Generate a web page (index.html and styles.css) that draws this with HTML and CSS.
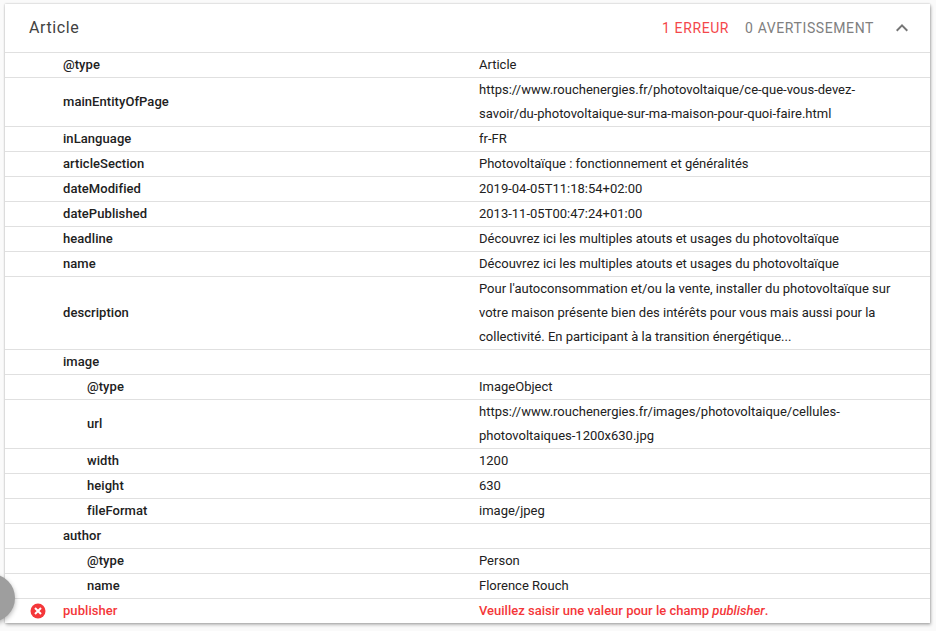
FILE: index.html
```html
<!DOCTYPE html>
<html lang="fr">
<head>
<meta charset="utf-8">
<title>Article</title>
<link rel="stylesheet" href="styles.css">
</head>
<body>
<section class="card">
  <header class="head">
    <h2 class="title">Article</h2>
    <span class="count err">1 ERREUR</span>
    <span class="count warn">0 AVERTISSEMENT</span>
    <svg class="chev" width="24" height="24" viewBox="0 0 24 24"><path d="M7.41 15.41 12 10.83l4.59 4.58L18 14l-6-6-6 6z" fill="#757575"/></svg>
  </header>
  <div class="row"><div class="mark"></div><div class="key">@type</div><div class="val">Article</div></div>
  <div class="row"><div class="mark"></div><div class="key">mainEntityOfPage</div><div class="val">https://www.rouchenergies.fr/photovoltaique/ce-que-vous-devez-<br>savoir/du-photovoltaique-sur-ma-maison-pour-quoi-faire.html</div></div>
  <div class="row"><div class="mark"></div><div class="key">inLanguage</div><div class="val">fr-FR</div></div>
  <div class="row"><div class="mark"></div><div class="key">articleSection</div><div class="val">Photovoltaïque : fonctionnement et généralités</div></div>
  <div class="row"><div class="mark"></div><div class="key">dateModified</div><div class="val">2019-04-05T11:18:54+02:00</div></div>
  <div class="row"><div class="mark"></div><div class="key">datePublished</div><div class="val">2013-11-05T00:47:24+01:00</div></div>
  <div class="row"><div class="mark"></div><div class="key">headline</div><div class="val">Découvrez ici les multiples atouts et usages du photovoltaïque</div></div>
  <div class="row"><div class="mark"></div><div class="key">name</div><div class="val">Découvrez ici les multiples atouts et usages du photovoltaïque</div></div>
  <div class="row"><div class="mark"></div><div class="key">description</div><div class="val">Pour l'autoconsommation et/ou la vente, installer du photovoltaïque sur<br>votre maison présente bien des intérêts pour vous mais aussi pour la<br>collectivité. En participant à la transition énergétique...</div></div>
  <div class="row"><div class="mark"></div><div class="key">image</div><div class="val"></div></div>
  <div class="row"><div class="mark"></div><div class="key sub">@type</div><div class="val">ImageObject</div></div>
  <div class="row"><div class="mark"></div><div class="key sub">url</div><div class="val">https://www.rouchenergies.fr/images/photovoltaique/cellules-<br>photovoltaiques-1200x630.jpg</div></div>
  <div class="row"><div class="mark"></div><div class="key sub">width</div><div class="val">1200</div></div>
  <div class="row"><div class="mark"></div><div class="key sub">height</div><div class="val">630</div></div>
  <div class="row"><div class="mark"></div><div class="key sub">fileFormat</div><div class="val">image/jpeg</div></div>
  <div class="row"><div class="mark"></div><div class="key">author</div><div class="val"></div></div>
  <div class="row"><div class="mark"></div><div class="key sub">@type</div><div class="val">Person</div></div>
  <div class="row"><div class="mark"></div><div class="key sub">name</div><div class="val">Florence Rouch</div></div>
  <div class="row error"><div class="mark"><svg width="16" height="16" viewBox="0 0 16 16"><circle cx="8" cy="8" r="7.5" fill="#f4373a"/><path d="M5 5l6 6M11 5l-6 6" stroke="#fff" stroke-width="2"/></svg></div><div class="key">publisher</div><div class="val">Veuillez saisir une valeur pour le champ <em>publisher</em>.</div></div>
</section>
<div class="fab"></div>
</body>
</html>
```
FILE: styles.css
```css
html, body { margin: 0; height: 100%; overflow: hidden; }
body {
  background: #fafafa;
  font-family: Roboto, "Liberation Sans", sans-serif;
  font-size: 13px;
  color: #212121;
  padding: 4px 6px 0 5px;
  box-sizing: border-box;
  position: relative;
}
.card {
  background: #fff;
  box-shadow: 0 0 2px rgba(0,0,0,.25), 1px 2px 3px rgba(0,0,0,.25);
}
.head {
  display: flex;
  align-items: center;
  height: 47px;
  padding: 0 16px 1px 24px;
  border-bottom: 1px solid #e0e0e0;
}
.title {
  flex: 1;
  margin: 0;
  font-size: 16px;
  font-weight: 400;
  letter-spacing: .6px;
  color: #424242;
}
.count {
  font-size: 14px;
  letter-spacing: .6px;
  margin-right: 16px;
}
.err { color: #f4474a; }
.warn { color: #808080; }
.row {
  display: flex;
  align-items: center;
  line-height: 24px;
  border-bottom: 1px solid #e0e0e0;
}
.row:last-child { border-bottom: 0; }
.mark {
  width: 58px;
  flex: none;
  display: flex;
  justify-content: center;
  padding-left: 8px;
  box-sizing: border-box;
}
.key {
  width: 416px;
  flex: none;
  box-sizing: border-box;
  font-weight: 500;
  letter-spacing: .06px;
}
.key.sub { padding-left: 24px; }
.val { flex: 1; }
.error .key, .error .val { color: #f4373a; }
.error .val { font-weight: 500; }
.fab {
  position: absolute;
  left: -33px;
  top: 574px;
  width: 48px;
  height: 48px;
  border-radius: 50%;
  background: #9e9e9e;
  box-shadow: 0 2px 5px rgba(0,0,0,.3);
}
```
